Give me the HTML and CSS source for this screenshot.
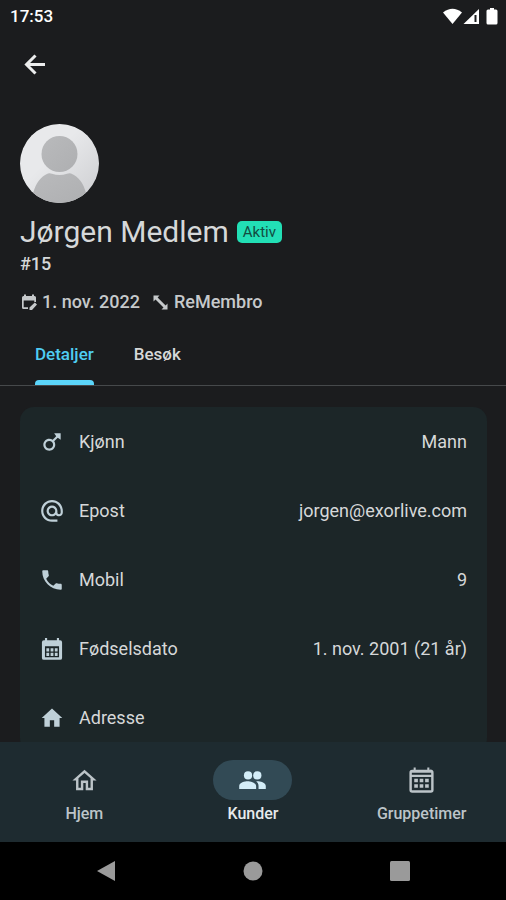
FILE: index.html
```html
<!DOCTYPE html>
<html lang="nb">
<head>
<meta charset="utf-8">
<meta name="viewport" content="width=device-width, initial-scale=1">
<title>Jørgen Medlem</title>
<link rel="stylesheet" href="styles.css">
</head>
<body>
<div class="screen">
  <header class="status-bar">
    <time>17:53</time>
    <svg class="status-icons" viewBox="0 0 56 20" aria-hidden="true">
      <path d="M0 4.500Q9.500 -3 19 4.500L9.500 16z"/>
      <path d="M36 1v15H20.500z"/>
      <path class="cutout" d="M31.500 7h2v7h-2z"/>
      <path d="M47 0h4v1.500h2a1.500 1.500 0 0 1 1.500 1.500v12a1.500 1.500 0 0 1-1.500 1.500h-8a1.500 1.500 0 0 1-1.500-1.500V3a1.500 1.500 0 0 1 1.500-1.500h2z"/>
    </svg>
  </header>

  <div class="app-bar">
    <button class="back" type="button" aria-label="Tilbake">
      <svg viewBox="0 0 24 24"><path class="stroke" d="M22 12.500H4M12.500 3.500l-9 9 9 9"/></svg>
    </button>
  </div>

  <main class="content">
    <section class="profile">
      <svg class="avatar" viewBox="0 0 80 80" aria-hidden="true">
        <defs>
          <linearGradient id="disc" x1="0" y1="0" x2="1" y2="1"><stop offset=".4" stop-color="#e8e9eb"/><stop offset="1" stop-color="#cccdd0"/></linearGradient>
          <linearGradient id="person" x1="0" y1="0" x2="1" y2="1"><stop offset="0" stop-color="#b9babc"/><stop offset="1" stop-color="#aeafb1"/></linearGradient>
          <clipPath id="round"><circle cx="39.500" cy="39.500" r="39.500"/></clipPath>
        </defs>
        <g clip-path="url(#round)">
          <circle cx="39.500" cy="39.500" r="40" fill="url(#disc)"/>
          <circle cx="39.500" cy="30" r="18" fill="url(#person)"/>
          <path d="M13 80V69C16 59 21 52 28 49.500q2-.5 4 .3 7.500 2.400 15 0 2-.8 4-.3C58 52 63.500 59 66 69v11z" fill="url(#person)"/>
        </g>
      </svg>
      <div class="name-row">
        <h1>Jørgen Medlem</h1>
        <span class="badge">Aktiv</span>
      </div>
      <p class="member-id">#15</p>
      <div class="meta">
        <span class="meta-item">
          <svg viewBox="0 0 18 18"><path d="M4 1.500V3H3.500A1.500 1.500 0 0 0 2 4.500v10A1.500 1.500 0 0 0 3.500 16H8v-1.700H3.700V7.500h10.600V9H16V4.500A1.500 1.500 0 0 0 14.500 3H14V1.500h-2V3H6V1.500zM9.500 14.500V17H12l5-5.500L14.800 9.500z"/></svg>
          1. nov. 2022
        </span>
        <span class="meta-item">
          <svg viewBox="0 0 18 18"><path d="M1.500 2.500h6L5.600 4.400l8 8 1.900-1.900v6h-6l2-1.900-8-8-2 1.900z"/></svg>
          ReMembro
        </span>
      </div>
    </section>

    <nav class="tabs" aria-label="Kundevisning">
      <a class="tab active" href="#detaljer">Detaljer</a>
      <a class="tab" href="#besok">Besøk</a>
    </nav>

    <dl class="card" id="detaljer">
      <div class="row">
        <svg viewBox="0 0 24 24"><path d="M9.500 11c1.930 0 3.500 1.570 3.500 3.500S11.430 18 9.500 18 6 16.430 6 14.500 7.570 11 9.500 11zm0-2C6.460 9 4 11.460 4 14.500S6.460 20 9.500 20s5.500-2.460 5.500-5.500c0-1.160-.36-2.230-.97-3.120L17.300 8.100 20 10V4h-6l1.900 2.700-3.290 3.270C11.730 9.360 10.660 9 9.500 9z"/></svg>
        <dt>Kjønn</dt><dd>Mann</dd>
      </div>
      <div class="row">
        <svg viewBox="0 0 24 24"><path d="M12 1.950c-5.520 0-10 4.480-10 10s4.480 10 10 10h5v-2h-5c-4.340 0-8-3.660-8-8s3.660-8 8-8 8 3.660 8 8v1.430c0 .79-.71 1.570-1.500 1.570s-1.500-.78-1.500-1.570v-1.430c0-2.760-2.240-5-5-5s-5 2.240-5 5 2.240 5 5 5c1.380 0 2.640-.56 3.540-1.470.65.89 1.770 1.470 2.960 1.470 1.970 0 3.500-1.600 3.500-3.570v-1.430c0-5.520-4.480-10-10-10zm0 13c-1.660 0-3-1.340-3-3s1.340-3 3-3 3 1.340 3 3-1.340 3-3 3z"/></svg>
        <dt>Epost</dt><dd>jorgen@exorlive.com</dd>
      </div>
      <div class="row">
        <svg viewBox="0 0 24 24"><path d="M6.620 10.790c1.440 2.830 3.760 5.140 6.590 6.590l2.200-2.200c.27-.27.67-.36 1.020-.24 1.120.37 2.330.57 3.570.57.55 0 1 .45 1 1V20c0 .55-.45 1-1 1-9.390 0-17-7.610-17-17 0-.55.45-1 1-1h3.500c.55 0 1 .45 1 1 0 1.250.2 2.450.57 3.570.11.35.03.74-.25 1.020l-2.200 2.200z"/></svg>
        <dt>Mobil</dt><dd>9</dd>
      </div>
      <div class="row">
        <svg viewBox="0 0 24 24"><path fill-rule="evenodd" d="M5.500 1.800h2V4h9V1.800h2V4h1A1.800 1.800 0 0 1 21.300 5.800v14.400a1.800 1.800 0 0 1-1.800 1.800h-15a1.800 1.800 0 0 1-1.800-1.800V5.800A1.800 1.800 0 0 1 4.500 4h1zM5.500 9.500v10h13v-10zM6.800 11.200h2.600v3H6.800zm3.900 0h2.600v3h-2.600zm3.900 0h2.600v3h-2.600zM6.800 15.500h2.600v3H6.800zm3.900 0h2.600v3h-2.600zm3.900 0h2.600v3h-2.600z"/></svg>
        <dt>Fødselsdato</dt><dd>1. nov. 2001 (21 år)</dd>
      </div>
      <div class="row">
        <svg viewBox="0 0 24 24"><path d="M10 20v-6h4v6h5v-8h2.500L12 3.300 2.500 12H5v8z"/></svg>
        <dt>Adresse</dt><dd></dd>
      </div>
    </dl>
  </main>

  <nav class="bottom-nav" aria-label="Hovedmeny">
    <a class="nav-item" href="#hjem">
      <span class="pill"><svg viewBox="0 0 24 24"><path d="M12 5.690l5 4.500V18h-2v-6H9v6H7v-7.810l5-4.500M12 3L2 12h3v8h6v-6h2v6h6v-8h3L12 3z"/></svg></span>
      Hjem
    </a>
    <a class="nav-item current" href="#kunder" aria-current="page">
      <span class="pill"><svg viewBox="0 0 24 24"><circle cx="8.300" cy="7.800" r="3.400"/><circle cx="16" cy="7.800" r="3.400"/><path d="M8 12.600c-2.330 0-7 1.170-7 3.900V19h14v-2.500c0-2.730-4.670-3.900-7-3.900zm8 0c-.29 0-.62.02-.97.05 1.160.84 1.970 2.370 1.970 3.850V19h6v-2.500c0-2.730-4.670-3.900-7-3.900z"/></svg></span>
      Kunder
    </a>
    <a class="nav-item" href="#gruppetimer">
      <span class="pill"><svg viewBox="0 0 24 24"><path fill-rule="evenodd" d="M5.500 1.200h1.700v2h9.600v-2h1.700v2A2.300 2.300 0 0 1 22 5.500v14.300a2.300 2.300 0 0 1-2.300 2.300H4.300A2.300 2.300 0 0 1 2 19.800V5.500a2.300 2.300 0 0 1 2.300-2.300h1.200zM4 5.600v1.600h16V5.600zM4 9v11h16V9zM6 10.500h3v3H6zm4.500 0h3v3h-3zm4.500 0h3v3h-3zM6 15h3v3H6zm4.500 0h3v3h-3zm4.500 0h3v3h-3z"/></svg></span>
      Gruppetimer
    </a>
  </nav>

  <div class="system-nav">
    <button type="button" aria-label="Systemtilbake"><svg viewBox="0 0 22 22"><path d="M20 1v20L2 11z"/></svg></button>
    <button type="button" aria-label="Startskjerm"><svg viewBox="0 0 22 22"><circle cx="11" cy="11" r="9.500"/></svg></button>
    <button type="button" aria-label="Oversikt"><svg viewBox="0 0 22 22"><rect x="1" y="1" width="20" height="20" rx="1.500"/></svg></button>
  </div>
</div>
</body>
</html>
```
FILE: styles.css
```css
* { box-sizing: border-box; }

body {
  margin: 0;
  background: #1b1c1e;
  color: #d6d8d9;
  font-family: Roboto, "Liberation Sans", sans-serif;
  font-size: 18px;
  font-weight: 400;
  line-height: 24px;
}

h1, p, dl, dt, dd { margin: 0; }
a { color: inherit; text-decoration: none; }
svg { display: block; fill: currentColor; flex: none; }
button { border: 0; padding: 0; background: none; color: inherit; }

.screen {
  display: flex;
  flex-direction: column;
  height: 100vh;
}

.status-bar {
  display: flex;
  justify-content: space-between;
  padding: 4px 7px 4px 10px;
  color: #fff;
  font-size: 17px;
  font-weight: 500;
}
.status-icons { width: 56px; height: 20px; margin-top: 4px; }
.cutout { fill: #1b1c1e; }

.app-bar { padding: 20px 23px; color: #eceded; }
.back { display: block; }
.back svg { width: 24px; height: 24px; }
.stroke { fill: none; stroke: currentColor; stroke-width: 3; }

.content {
  flex: 1;
  min-height: 0;
  overflow: hidden;
}

.profile { padding: 28px 20px 0; }
.avatar { width: 80px; height: 80px; }
.name-row {
  display: flex;
  align-items: center;
  gap: 8px;
  margin-top: 10px;
}
h1 { font-size: 30px; font-weight: 400; line-height: 36px; }
.badge {
  padding: 0 6px;
  border-radius: 5px;
  background: #22dfb5;
  color: #124c41;
  font-size: 15px;
  line-height: 22px;
}
.member-id { margin-top: 2px; }
.meta { display: flex; gap: 12px; margin-top: 14px; color: #c6c9cb; }
.meta-item { display: flex; align-items: center; gap: 4px; }
.meta svg { width: 18px; height: 18px; }
.member-id, .meta { font-weight: 500; }

.tabs {
  display: flex;
  margin-top: 16px;
  padding: 0 15px;
  border-bottom: 1px solid #46494b;
  font-size: 17px;
  font-weight: 500;
}
.tab { padding: 12px 20px 0; }
.tab::after {
  content: "";
  display: block;
  height: 5px;
  margin-top: 14px;
  border-radius: 4px 4px 0 0;
}
.active { color: #4fcdf2; }
.active::after { background: #5bd5fa; }

.card {
  margin: 21px 19px 0 20px;
  border-radius: 14px;
  background: #1c2628;
}
.row {
  display: flex;
  align-items: center;
  height: 69px;
  padding: 0 20px 0 19px;
}
.row svg { width: 26px; height: 26px; color: #bfd0d8; }
dt { margin-left: 14px; }
dd { margin-left: auto; }

.bottom-nav {
  display: grid;
  grid-template-columns: repeat(3, 1fr);
  padding: 18px 0 16px;
  background: #1e2b30;
  font-size: 16px;
  font-weight: 500;
}
.nav-item {
  display: flex;
  flex-direction: column;
  align-items: center;
  gap: 2px;
  color: #bcc4c8;
}
.pill {
  display: grid;
  place-items: center;
  width: 79px;
  height: 40px;
  border-radius: 20px;
}
.pill svg { width: 29px; height: 29px; }
.current { color: #e6eaec; }
.current .pill { background: #324a55; color: #d3edf8; }

.system-nav {
  display: grid;
  grid-template-columns: repeat(3, 1fr);
  place-items: center;
  height: 58px;
  padding: 0 33px;
  background: #000;
  color: #9a9a9a;
}
.system-nav svg { width: 22px; height: 22px; }
```
